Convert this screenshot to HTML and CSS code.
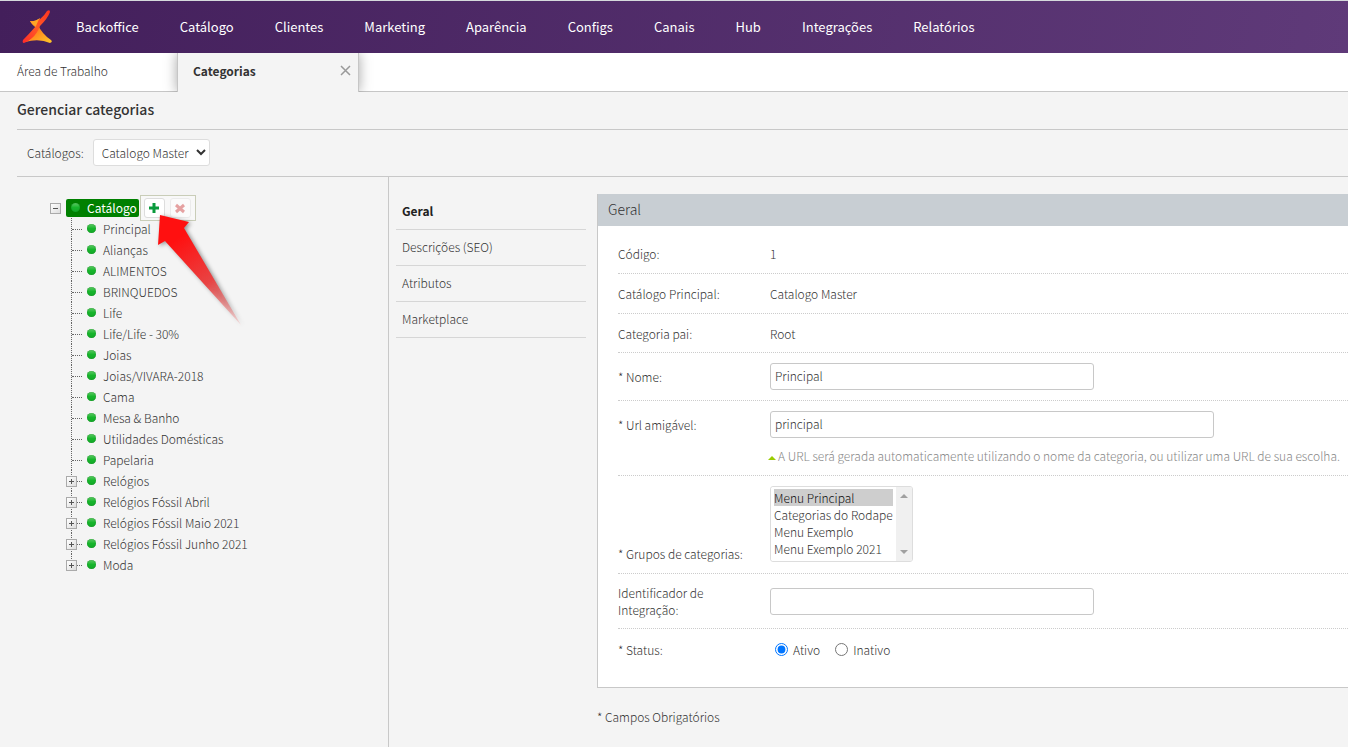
FILE: index.html
```html
<!DOCTYPE html>
<html lang="pt-BR">
<head>
<meta charset="UTF-8">
<meta name="viewport" content="width=device-width, initial-scale=1.0">
<title>Gerenciar categorias</title>
<link rel="stylesheet" href="styles.css">
</head>
<body>
<header class="topbar">
    <a href="#" class="logo" aria-label="Início">
        <svg width="30" height="34" viewBox="0 0 30 34">
            <defs>
                <linearGradient id="logo-red" x1="0" y1="1" x2="1" y2="0">
                    <stop offset="0" stop-color="#ff2a2a"/>
                    <stop offset="0.5" stop-color="#ff5a25"/>
                    <stop offset="1" stop-color="#ff3220"/>
                </linearGradient>
                <linearGradient id="logo-yellow" x1="0" y1="0" x2="1" y2="1">
                    <stop offset="0.3" stop-color="#ff7a1c"/>
                    <stop offset="1" stop-color="#ffc928"/>
                </linearGradient>
            </defs>
            <path d="M8 11Q12 12 18 8L15 18Q12 17 8 11Z" fill="#ffa726"/>
            <path d="M16 15Q20 24 29 30Q31 32 28 33Q17 28 3 32Q8 28 16 15Z" fill="url(#logo-yellow)"/>
            <path d="M25 1Q28 -1 28 2Q26 8 18 16Q15 24 10 28Q6 32 2 33Q0 33 1 30Q7 24 14 16Q11 16 8 11Q18 13 25 1Z" fill="url(#logo-red)"/>
            <path d="M8 11Q12 12 17 9L14 16Q11 16 8 11Z" fill="#ffa726"/>
        </svg>
    </a>
    <nav class="menu">
        <a href="#">Backoffice</a>
        <a href="#">Catálogo</a>
        <a href="#">Clientes</a>
        <a href="#">Marketing</a>
        <a href="#">Aparência</a>
        <a href="#">Configs</a>
        <a href="#">Canais</a>
        <a href="#">Hub</a>
        <a href="#">Integrações</a>
        <a href="#">Relatórios</a>
    </nav>
</header>

<div class="tabs">
    <a href="#" class="tab">Área de Trabalho</a>
    <div class="tab active">
        <a href="#">Categorias</a>
        <button class="close" type="button" aria-label="Fechar">
            <svg width="11" height="11" viewBox="0 0 11 11"><path d="M1 1L10 10M10 1L1 10" stroke="#999" stroke-width="1.500"/></svg>
        </button>
    </div>
</div>

<main class="page">
    <h1>Gerenciar categorias</h1>
    <div class="filter">
        <label for="catalogos">Catálogos:</label>
        <select id="catalogos">
            <option>Catalogo Master</option>
        </select>
    </div>

    <div class="columns">
        <div class="tree">
            <div class="tree-root">
                <button class="toggle minus" type="button" aria-label="Recolher"></button>
                <a href="#" class="root-name"><span class="dot"></span>Catálogo</a>
                <div class="tools">
                    <button type="button" aria-label="Adicionar">
                        <svg width="12" height="12" viewBox="0 0 12 12"><path d="M6 1V11M1 6H11" stroke="#0a9a3c" stroke-width="3"/></svg>
                    </button>
                    <button type="button" aria-label="Excluir" disabled>
                        <svg width="12" height="12" viewBox="0 0 12 12"><path d="M2 3L10 10M10 3L2 10" stroke="#d03a3a" stroke-width="3"/></svg>
                    </button>
                </div>
            </div>
            <ul>
                <li><a href="#"><span class="dot"></span>Principal</a></li>
                <li><a href="#"><span class="dot"></span>Alianças</a></li>
                <li><a href="#"><span class="dot"></span>ALIMENTOS</a></li>
                <li><a href="#"><span class="dot"></span>BRINQUEDOS</a></li>
                <li><a href="#"><span class="dot"></span>Life</a></li>
                <li><a href="#"><span class="dot"></span>Life/Life - 30%</a></li>
                <li><a href="#"><span class="dot"></span>Joias</a></li>
                <li><a href="#"><span class="dot"></span>Joias/VIVARA-2018</a></li>
                <li><a href="#"><span class="dot"></span>Cama</a></li>
                <li><a href="#"><span class="dot"></span>Mesa &amp; Banho</a></li>
                <li><a href="#"><span class="dot"></span>Utilidades Domésticas</a></li>
                <li><a href="#"><span class="dot"></span>Papelaria</a></li>
                <li><button class="toggle" type="button" aria-label="Expandir"></button><a href="#"><span class="dot"></span>Relógios</a></li>
                <li><button class="toggle" type="button" aria-label="Expandir"></button><a href="#"><span class="dot"></span>Relógios Fóssil Abril</a></li>
                <li><button class="toggle" type="button" aria-label="Expandir"></button><a href="#"><span class="dot"></span>Relógios Fóssil Maio 2021</a></li>
                <li><button class="toggle" type="button" aria-label="Expandir"></button><a href="#"><span class="dot"></span>Relógios Fóssil Junho 2021</a></li>
                <li><button class="toggle" type="button" aria-label="Expandir"></button><a href="#"><span class="dot"></span>Moda</a></li>
            </ul>
            <svg class="pointer" width="100" height="120" viewBox="0 0 100 120">
                <defs>
                    <linearGradient id="pointer-fill" gradientUnits="userSpaceOnUse" x1="10" y1="6" x2="88" y2="116">
                        <stop offset="0.2" stop-color="#ff1010"/>
                        <stop offset="0.6" stop-color="#e84444"/>
                        <stop offset="1" stop-color="#f08080" stop-opacity="0.2"/>
                    </linearGradient>
                </defs>
                <path d="M7 5L36 12L31 18L88 115L12 31L5 35Z" fill="url(#pointer-fill)"/>
            </svg>
        </div>

        <nav class="sections">
            <a href="#" class="current">Geral</a>
            <a href="#">Descrições (SEO)</a>
            <a href="#">Atributos</a>
            <a href="#">Marketplace</a>
        </nav>

        <form class="content">
            <div class="panel">
                <h2>Geral</h2>
                <div class="fields">
                    <div class="row">
                        <span class="label">Código:</span>
                        <span>1</span>
                    </div>
                    <div class="row">
                        <span class="label">Catálogo Principal:</span>
                        <span>Catalogo Master</span>
                    </div>
                    <div class="row">
                        <span class="label">Categoria pai:</span>
                        <span>Root</span>
                    </div>
                    <div class="row">
                        <label class="label" for="nome">* Nome:</label>
                        <input type="text" id="nome" value="Principal">
                    </div>
                    <div class="row top">
                        <label class="label" for="url">* Url amigável:</label>
                        <div>
                            <input type="text" id="url" class="wide" value="principal">
                            <p class="hint">A URL será gerada automaticamente utilizando o nome da categoria, ou utilizar uma URL de sua escolha.</p>
                        </div>
                    </div>
                    <div class="row bottom">
                        <label class="label" for="grupos">* Grupos de categorias:</label>
                        <div class="listbox">
                            <select id="grupos" size="4" multiple>
                                <option selected>Menu Principal</option>
                                <option>Categorias do Rodape</option>
                                <option>Menu Exemplo</option>
                                <option>Menu Exemplo 2021</option>
                            </select>
                            <span class="scroll"></span>
                        </div>
                    </div>
                    <div class="row">
                        <label class="label narrow" for="integracao">Identificador de Integração:</label>
                        <input type="text" id="integracao">
                    </div>
                    <div class="row">
                        <span class="label">* Status:</span>
                        <div class="radios">
                            <input type="radio" name="status" id="ativo" checked>
                            <label for="ativo">Ativo</label>
                            <input type="radio" name="status" id="inativo">
                            <label for="inativo">Inativo</label>
                        </div>
                    </div>
                </div>
            </div>
            <p class="required">* Campos Obrigatórios</p>
        </form>
    </div>
</main>
</body>
</html>
```
FILE: styles.css
```css
* {
    box-sizing: border-box;
}
body {
    margin: 0;
    min-height: 100vh;
    display: flex;
    flex-direction: column;
    background-color: #f4f4f4;
    color: #333;
    font-family: "Noto Sans CJK JP", "Open Sans", sans-serif;
    font-size: 12px;
    font-weight: 300;
    line-height: 17px;
}
a {
    color: inherit;
    text-decoration: none;
}
button, input, select {
    font: inherit;
    color: inherit;
}
button {
    padding: 0;
    cursor: pointer;
}

/* top menu */
.topbar {
    display: flex;
    align-items: center;
    height: 53px;
    border-top: 1px solid #d5d9dc;
    padding-left: 22px;
    background: linear-gradient(100deg, #431f5b, #5f3a79);
    color: #fff;
}
.logo {
    display: flex;
    width: 54px;
}
.menu {
    display: flex;
    gap: 41px;
    padding-bottom: 2px;
    font-size: 13px;
    font-weight: 400;
}

/* tabs */
.tabs {
    display: flex;
    height: 39px;
    background-color: #fff;
    box-shadow: inset 0 -1px #c6c6c6;
    line-height: 35px;
    overflow: hidden;
}
.tab {
    width: 177px;
    padding-left: 17px;
}
.tab.active {
    display: flex;
    align-items: center;
    justify-content: space-between;
    width: 182px;
    padding: 0 7px 4px 15px;
    border: solid #c6c6c6;
    border-width: 0 1px;
    background-color: #f4f4f4;
    box-shadow: 0 0 12px rgba(0, 0, 0, 0.35);
    font-weight: 700;
}
.close {
    display: flex;
    border: none;
    background: none;
}

/* page */
.page {
    flex: 1;
    display: flex;
    flex-direction: column;
    padding-left: 17px;
}
h1 {
    margin: 0;
    padding-bottom: 2px;
    border-bottom: 1px solid #c8c8c8;
    font-size: 14px;
    font-weight: 500;
    line-height: 35px;
}
.filter {
    display: flex;
    align-items: center;
    gap: 9px;
    height: 47px;
    padding: 0 0 2px 10px;
    border-bottom: 1px solid #c8c8c8;
}
.filter select {
    width: 117px;
    height: 27px;
    padding: 0 0 0 4px;
    border: 1px solid #ddd;
    border-radius: 3px;
    background-color: #fff;
}
.columns {
    flex: 1;
    display: flex;
}

/* category tree */
.tree {
    position: relative;
    flex: 0 0 372px;
    padding: 18px 0 0 33px;
    border-right: 1px solid #c8c8c8;
}
.tree-root {
    display: flex;
    align-items: center;
    height: 26px;
}
.toggle {
    width: 11px;
    height: 11px;
    border: 1px solid #aaa;
    background:
        linear-gradient(#555, #555) center / 5px 1px no-repeat,
        linear-gradient(#555, #555) center / 1px 5px no-repeat,
        linear-gradient(135deg, #fff, #ddd);
}
.toggle.minus {
    margin-right: 5px;
    background:
        linear-gradient(#555, #555) center / 5px 1px no-repeat,
        linear-gradient(135deg, #fff, #ddd);
}
.dot {
    flex: none;
    width: 9px;
    height: 9px;
    border-radius: 50%;
    background: linear-gradient(#5fcb66, #17b52c 50%, #14a828);
    box-shadow: inset 0 0 1px #0a7a1a;
}
.root-name {
    display: flex;
    align-items: center;
    gap: 7px;
    height: 18px;
    margin-right: 1px;
    padding: 0 2px 0 5px;
    border-radius: 2px;
    background-color: #008000;
    color: #fff;
    font-weight: 400;
    line-height: 15px;
    padding-bottom: 2px;
}
.tools {
    display: flex;
    gap: 5px;
    padding: 2px 4px 2px 3px;
    border: 1px solid #c9cdb8;
    background-color: #f8f8f8;
}
.tools button {
    display: flex;
    align-items: center;
    justify-content: center;
    width: 21px;
    height: 20px;
    border: 1px solid #ddd;
    border-radius: 3px;
    background-color: #fff;
}
.tools button:disabled {
    opacity: 0.45;
}
.tree ul {
    margin: -3px 0 0;
    padding: 0 0 0 16px;
    list-style: none;
}
.tree li {
    position: relative;
    display: flex;
    align-items: center;
    height: 21px;
    padding-left: 21px;
}
.tree li::before {
    content: "";
    position: absolute;
    left: 5px;
    top: 0;
    height: 100%;
    border-left: 1px dotted #666;
}
.tree li:last-child::before {
    height: 50%;
}
.tree li::after {
    content: "";
    position: absolute;
    left: 6px;
    top: 11px;
    width: 10px;
    border-top: 1px dotted #666;
}
.tree li a {
    display: flex;
    align-items: center;
    gap: 7px;
    line-height: 15px;
}
.tree li .toggle {
    position: absolute;
    z-index: 1;
    left: 0;
    top: 6px;
}
.pointer {
    position: absolute;
    z-index: 2;
    left: 136px;
    top: 33px;
    filter: drop-shadow(2px 1px 2px rgba(0, 0, 0, 0.4));
    pointer-events: none;
}

/* section links */
.sections {
    flex: 0 0 190px;
    margin: 17px 11px 0 7px;
}
.sections a {
    display: block;
    padding: 0 0 2px 6px;
    border-bottom: 1px solid #d6d6d6;
    line-height: 33px;
}
.sections .current {
    color: #222;
    font-weight: 700;
}

/* form */
.content {
    flex: 1;
    min-width: 0;
    padding-top: 17px;
}
.panel {
    padding-bottom: 18px;
    border: solid #c8c8c8;
    border-width: 0 0 1px 1px;
    background-color: #fff;
}
h2 {
    margin: 0;
    padding: 0 0 2px 10px;
    background-color: #c8ced3;
    font-size: 14px;
    font-weight: 300;
    line-height: 30px;
}
.fields {
    padding: 8px 0 0 20px;
}
.row {
    display: flex;
    align-items: center;
    min-height: 40px;
    padding: 10px 0;
    border-bottom: 1px dotted #ccc;
}
.row:nth-child(3) {
    min-height: 39px;
}
.row:last-child {
    border-bottom: none;
}
.row.top {
    align-items: flex-start;
}
.row.bottom {
    align-items: flex-end;
    padding-bottom: 11px;
}
.label {
    flex: 0 0 152px;
}
.label.narrow {
    padding-right: 50px;
}
.row.top .label {
    line-height: 27px;
}
input[type="text"] {
    display: block;
    width: 324px;
    height: 27px;
    padding: 0 5px 2px 4px;
    border: 1px solid #c8c8c8;
    border-radius: 3px;
    background-color: #fff;
}
input.wide {
    width: 444px;
}
.hint {
    display: flex;
    gap: 2px;
    margin: 9px 0 1px -2px;
    color: #888;
    white-space: nowrap;
}
.hint::before {
    content: "";
    height: 4px;
    margin-top: 5px;
    border: solid transparent;
    border-width: 0 4px 4px;
    border-bottom-color: #9c0;
}
.listbox {
    display: flex;
    width: 143px;
    height: 76px;
    border: 1px solid #ddd;
    border-radius: 3px;
    overflow: hidden;
}
.listbox select {
    flex: 1;
    min-width: 0;
    padding: 2px 3px 0;
    border: none;
    background-color: #fff;
    overflow: hidden;
}
.listbox option {
    min-height: 17px;
    padding: 0;
    font-weight: 300;
    line-height: 17px;
}
.scroll {
    display: flex;
    flex-direction: column;
    justify-content: space-between;
    align-items: center;
    width: 16px;
    padding: 7px 0;
    background-color: #f0f0f0;
}
.scroll::before,
.scroll::after {
    content: "";
    border: solid transparent;
    border-width: 0 4px 4px;
    border-bottom-color: #a0a0a0;
}
.scroll::after {
    border-width: 4px 4px 0;
    border-top-color: #a0a0a0;
}
.radios {
    display: flex;
    align-items: center;
}
.radios input {
    margin: 0 5px;
}
.radios label {
    margin-right: 10px;
}
.required {
    margin: 20px 0;
}
```
